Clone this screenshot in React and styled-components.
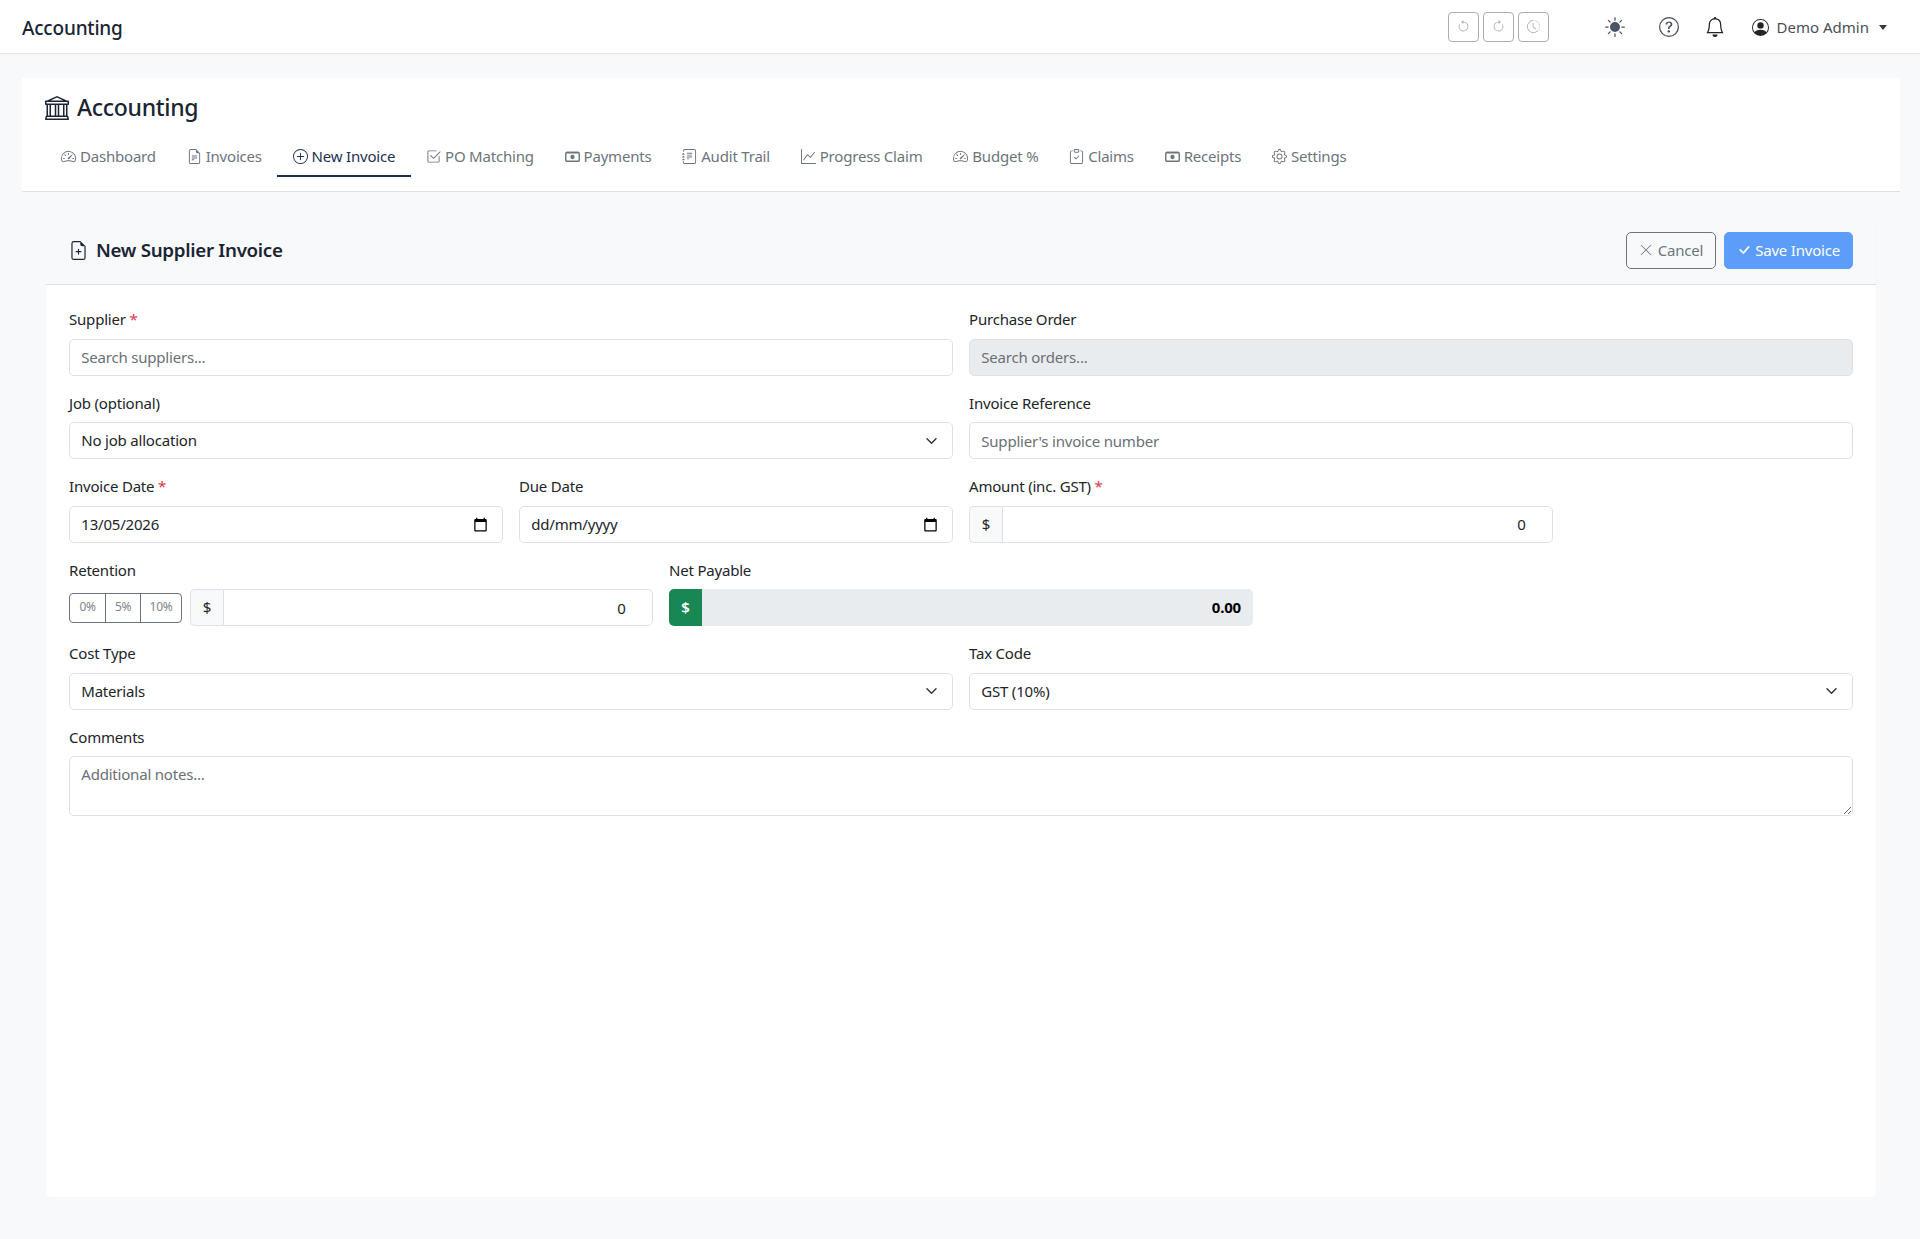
import React from 'react'
import styled, { createGlobalStyle } from 'styled-components'
import {
  BsSpeedometer2, BsFileEarmarkText, BsPlusCircle, BsCheck2Square, BsJournalText, BsGraphUp,
  BsClipboardCheck, BsGear, BsBank, BsFileEarmarkPlus, BsXLg, BsCheckLg, BsSunFill,
  BsQuestionCircle, BsBell, BsPersonCircle, BsArrowCounterclockwise, BsArrowClockwise, BsClockHistory,
} from 'react-icons/bs'

const GlobalStyle = createGlobalStyle`
  html, body {
    margin: 0;
    padding: 0;
    background: #f8f9fa;
    color: #212529;
    font-family: "Noto Sans", "Open Sans", sans-serif;
    font-size: 15px;
    line-height: 22.5px;
    letter-spacing: -0.2px;
  }
  * { box-sizing: border-box; }
`

const chevron = `url("data:image/svg+xml,%3csvg xmlns='http://www.w3.org/2000/svg' viewBox='0 0 16 16'%3e%3cpath fill='none' stroke='%23343a40' stroke-linecap='round' stroke-linejoin='round' stroke-width='2' d='m2 5 6 6 6-6'/%3e%3c/svg%3e")`

const Page = styled.div`
  width: 1920px;
  height: 1239px;
  overflow: hidden;
`

const TopBar = styled.header`
  height: 54px;
  background: #fff;
  border-bottom: 1px solid #e4e6e9;
  display: flex;
  align-items: center;
  padding: 0 33px 0 22px;
`

const AppName = styled.div`
  font-size: 19px;
  font-weight: 500;
  color: #1a2433;
  padding-top: 3px;
  flex: 1;
`

const HistoryGroup = styled.div`
  display: flex;
  gap: 4px;
  margin-right: 56px;
`

const HistoryButton = styled.button`
  width: 31px;
  height: 30px;
  padding: 0;
  background: #fff;
  border: 1px solid #a9aeb3;
  border-radius: 4px;
  color: #a9aeb3;
  display: flex;
  align-items: center;
  justify-content: center;
  font-size: 13px;
`

const BarIcon = styled.span`
  display: flex;
  font-size: 20px;
  color: ${p => p.$color || '#212529'};
  margin-right: ${p => p.$gap}px;
`

const UserMenu = styled.div`
  display: flex;
  align-items: center;
  color: #495057;
  font-size: 15px;
  letter-spacing: 0;
  padding-top: 1px;
  svg { color: #212529; font-size: 17px; margin-right: 8px; }
`

const Caret = styled.span`
  width: 0;
  height: 0;
  margin-left: 10px;
  border-top: 5px solid #343a40;
  border-left: 4.5px solid transparent;
  border-right: 4.5px solid transparent;
`

const Content = styled.main`
  padding: 24px 20px 0 22px;
`

const TabCard = styled.section`
  height: 114px;
  background: #fff;
  border-bottom: 1px solid #dee2e6;
  padding: 15px 23px 0;
`

const PageTitle = styled.h1`
  margin: 0 0 16px;
  display: flex;
  align-items: center;
  gap: 8px;
  font-size: 23px;
  line-height: 29px;
  font-weight: 500;
  color: #1a2433;
  letter-spacing: -0.3px;
  svg { font-size: 24px; }
`

const TabRow = styled.nav`
  display: flex;
  margin-left: 0.6px;
`

const Tab = styled.a`
  display: flex;
  align-items: center;
  gap: 4px;
  height: 39px;
  padding: 0 15.4px;
  color: ${p => (p.$active ? '#1e3054' : '#6c757d')};
  border-bottom: 2px solid ${p => (p.$active ? '#1e3054' : 'transparent')};
  svg { font-size: 15px; }
`

const FormCard = styled.section`
  margin: 24px 24px 0;
  height: 981px;
  background: #fff;
  border-radius: 5px;
  box-shadow: 0 0 2px rgba(0, 0, 0, 0.03);
  overflow: hidden;
`

const FormHeader = styled.div`
  height: 69px;
  background: #f8f9fa;
  border-bottom: 1px solid #dee2e6;
  display: flex;
  align-items: center;
  justify-content: space-between;
  padding: 0 23px;
`

const FormTitle = styled.h2`
  margin: 0;
  display: flex;
  align-items: center;
  gap: 8px;
  font-size: 18.75px;
  font-weight: 600;
  color: #1a2433;
  letter-spacing: -0.3px;
  svg { font-size: 19px; }
`

const HeaderActions = styled.div`
  display: flex;
  gap: 8px;
`

const ActionButton = styled.button`
  height: 37px;
  display: flex;
  align-items: center;
  gap: ${p => (p.$primary ? 4 : 5)}px;
  padding: 0 12px;
  border-radius: 5px;
  font: inherit;
  letter-spacing: inherit;
  border: 1px solid ${p => (p.$primary ? '#5c9dfa' : '#6c757d')};
  background: ${p => (p.$primary ? '#5c9dfa' : 'transparent')};
  color: ${p => (p.$primary ? '#fff' : '#6c757d')};
  svg { font-size: 14px; }
`

const BoldCheck = styled(BsCheckLg)`
  stroke: currentColor;
  stroke-width: 0.6px;
`

const FormGrid = styled.div`
  display: grid;
  grid-template-columns: repeat(12, 1fr);
  column-gap: 16px;
  row-gap: 16px;
  padding: 23px;
`

const Field = styled.div`
  grid-column: span ${p => p.$span};
  min-width: 0;
`

const Label = styled.label`
  display: block;
  margin-bottom: 8px;
  color: #212529;
`

const Required = styled.span`
  color: #dc3545;
`

const Input = styled.input`
  width: 100%;
  height: 37px;
  padding: 0 11.25px;
  font: inherit;
  letter-spacing: inherit;
  color: #212529;
  background: ${p => (p.disabled ? '#e9ecef' : '#fff')};
  border: 1px solid #dee2e6;
  border-radius: 5px;
  &::placeholder { color: #6a7076; opacity: 1; }
`

const Select = styled.select`
  width: 100%;
  height: 37px;
  padding: 0 36px 0 11.25px;
  font: inherit;
  letter-spacing: inherit;
  color: #212529;
  background: #fff ${chevron} no-repeat right 13px center / 15px 12px;
  border: 1px solid #dee2e6;
  border-radius: 5px;
  appearance: none;
`

const DateBox = styled.div`
  height: 37px;
  display: flex;
  align-items: center;
  padding: 0 14px 0 11.25px;
  background: #fff;
  border: 1px solid #dee2e6;
  border-radius: 5px;
`

const DateText = styled.input`
  flex: 1;
  min-width: 0;
  padding: 0;
  border: 0;
  outline: 0;
  font: inherit;
  letter-spacing: inherit;
  color: #212529;
  &::placeholder { color: #212529; opacity: 1; }
`

const InputGroup = styled.div`
  display: flex;
  flex: 1;
  min-width: 0;
  height: 37px;
`

const Addon = styled.span`
  width: 33px;
  flex: none;
  display: flex;
  align-items: center;
  justify-content: center;
  border: ${p => (p.$green ? '0' : '1px solid #dee2e6')};
  border-right: 0;
  border-radius: 5px 0 0 5px;
  background: ${p => (p.$green ? '#198754' : '#f8f9fa')};
  color: ${p => (p.$green ? '#fff' : '#212529')};
  font-weight: ${p => (p.$green ? 600 : 400)};
`

const AmountInput = styled.input`
  flex: 1;
  min-width: 0;
  height: 37px;
  padding: 0 11.25px;
  font: inherit;
  letter-spacing: inherit;
  text-align: right;
  color: #212529;
  background: #fff;
  border: 1px solid #dee2e6;
  border-radius: 0 5px 5px 0;
`

const NetValue = styled.div`
  flex: 1;
  display: flex;
  align-items: center;
  justify-content: flex-end;
  padding: 0 12px;
  background: #e9ecef;
  border-radius: 0 5px 5px 0;
  font-weight: 700;
  color: #000;
`

const RetentionRow = styled.div`
  display: flex;
  align-items: center;
  gap: 8px;
`

const PercentGroup = styled.div`
  display: flex;
  flex: none;
  height: 30px;
  border: 1px solid #6c757d;
  border-radius: 4px;
`

const PercentButton = styled.button`
  width: ${p => p.$width}px;
  padding: 0;
  border: 0;
  border-left: ${p => (p.$first ? '0' : '1px solid #6c757d')};
  background: transparent;
  color: #7d858c;
  font: inherit;
  font-size: 12px;
  letter-spacing: -0.3px;
`

const Textarea = styled.textarea`
  display: block;
  width: 100%;
  height: 60px;
  padding: 6px 11.25px;
  font: inherit;
  letter-spacing: inherit;
  color: #212529;
  background: #fff;
  border: 1px solid #dee2e6;
  border-radius: 5px;
  resize: vertical;
  &::placeholder { color: #6a7076; opacity: 1; }
`

const CalendarIcon = () => (
  <svg width="15" height="15" viewBox="0 0 24 24" fill="#000">
    <path d="M20 3h-1V1h-2v2H7V1H5v2H4c-1.1 0-2 .9-2 2v16c0 1.1.9 2 2 2h16c1.1 0 2-.9 2-2V5c0-1.1-.9-2-2-2zm0 18H4V8h16v13z" />
  </svg>
)

// heavier than the bootstrap cash glyph, the note in the tabs has a thick frame
const CashIcon = () => (
  <svg width="15" height="15" viewBox="0 0 16 16" fill="currentColor">
    <path d="M1.5 2.5h13v1.2h-13z" opacity="0.7" />
    <rect x="0.8" y="4" width="14.4" height="9" rx="0.8" fill="none" stroke="currentColor" strokeWidth="1.5" />
    <circle cx="8" cy="8.5" r="2.3" />
  </svg>
)

const tabs = [
  ['Dashboard', BsSpeedometer2],
  ['Invoices', BsFileEarmarkText],
  ['New Invoice', BsPlusCircle],
  ['PO Matching', BsCheck2Square],
  ['Payments', CashIcon],
  ['Audit Trail', BsJournalText],
  ['Progress Claim', BsGraphUp],
  ['Budget %', BsSpeedometer2],
  ['Claims', BsClipboardCheck],
  ['Receipts', CashIcon],
  ['Settings', BsGear],
]

const App = () => (
  <Page>
    <GlobalStyle />
    <TopBar>
      <AppName>Accounting</AppName>
      <HistoryGroup>
        <HistoryButton><BsArrowCounterclockwise /></HistoryButton>
        <HistoryButton><BsArrowClockwise /></HistoryButton>
        <HistoryButton><BsClockHistory /></HistoryButton>
      </HistoryGroup>
      <BarIcon $gap={34} $color="#4a5563"><BsSunFill /></BarIcon>
      <BarIcon $gap={26} $color="#495057"><BsQuestionCircle /></BarIcon>
      <BarIcon $gap={27}><BsBell /></BarIcon>
      <UserMenu>
        <BsPersonCircle />
        Demo Admin
        <Caret />
      </UserMenu>
    </TopBar>
    <Content>
      <TabCard>
        <PageTitle><BsBank />Accounting</PageTitle>
        <TabRow>
          {tabs.map(([name, Icon]) => (
            <Tab key={name} $active={name === 'New Invoice'}><Icon />{name}</Tab>
          ))}
        </TabRow>
      </TabCard>
      <FormCard>
        <FormHeader>
          <FormTitle><BsFileEarmarkPlus />New Supplier Invoice</FormTitle>
          <HeaderActions>
            <ActionButton><BsXLg />Cancel</ActionButton>
            <ActionButton $primary><BoldCheck />Save Invoice</ActionButton>
          </HeaderActions>
        </FormHeader>
        <FormGrid>
          <Field $span={6}>
            <Label>Supplier <Required>*</Required></Label>
            <Input placeholder="Search suppliers..." />
          </Field>
          <Field $span={6}>
            <Label>Purchase Order</Label>
            <Input disabled placeholder="Search orders..." />
          </Field>
          <Field $span={6}>
            <Label>Job (optional)</Label>
            <Select defaultValue="none"><option value="none">No job allocation</option></Select>
          </Field>
          <Field $span={6}>
            <Label>Invoice Reference</Label>
            <Input placeholder="Supplier's invoice number" />
          </Field>
          <Field $span={3}>
            <Label>Invoice Date <Required>*</Required></Label>
            <DateBox><DateText defaultValue="13/05/2026" /><CalendarIcon /></DateBox>
          </Field>
          <Field $span={3}>
            <Label>Due Date</Label>
            <DateBox><DateText placeholder="dd/mm/yyyy" /><CalendarIcon /></DateBox>
          </Field>
          <Field $span={4}>
            <Label>Amount (inc. GST) <Required>*</Required></Label>
            <InputGroup>
              <Addon>$</Addon>
              <AmountInput type="number" defaultValue="0" />
            </InputGroup>
          </Field>
          <Field $span={4}>
            <Label>Retention</Label>
            <RetentionRow>
              <PercentGroup>
                <PercentButton $first $width={35}>0%</PercentButton>
                <PercentButton $width={35}>5%</PercentButton>
                <PercentButton $width={41}>10%</PercentButton>
              </PercentGroup>
              <InputGroup>
                <Addon>$</Addon>
                <AmountInput type="number" defaultValue="0" />
              </InputGroup>
            </RetentionRow>
          </Field>
          <Field $span={4}>
            <Label>Net Payable</Label>
            <InputGroup>
              <Addon $green>$</Addon>
              <NetValue>0.00</NetValue>
            </InputGroup>
          </Field>
          <Field $span={6}>
            <Label>Cost Type</Label>
            <Select defaultValue="materials"><option value="materials">Materials</option></Select>
          </Field>
          <Field $span={6}>
            <Label>Tax Code</Label>
            <Select defaultValue="gst"><option value="gst">GST (10%)</option></Select>
          </Field>
          <Field $span={12}>
            <Label>Comments</Label>
            <Textarea placeholder="Additional notes..." />
          </Field>
        </FormGrid>
      </FormCard>
    </Content>
  </Page>
)

export default App
